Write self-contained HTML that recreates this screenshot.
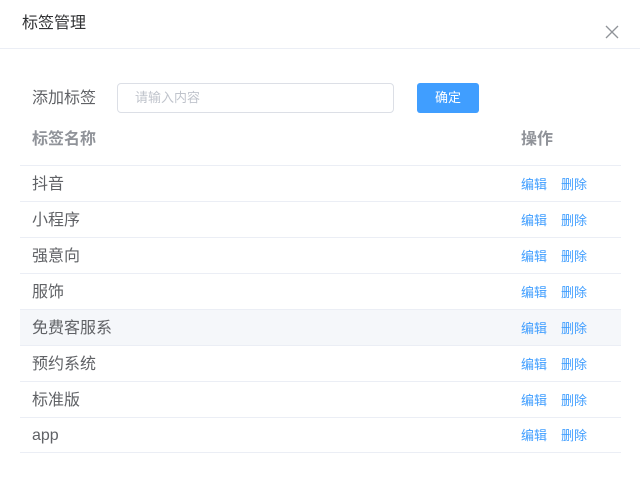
<!DOCTYPE html>
<html><head><meta charset="utf-8"><style>
*{margin:0;padding:0;box-sizing:border-box}
body{width:640px;height:494px;background:#fff;font-family:"Liberation Sans","Noto Sans CJK SC",sans-serif;position:relative;overflow:hidden}
.t{position:absolute;left:22px;top:12px;font-size:16px;color:#303133;line-height:24px}
.hd{position:absolute;left:0;right:0;top:48px;border-top:1px solid #ebeef5}
.x{position:absolute;left:605px;top:25px}
.lab{position:absolute;left:32px;top:88px;font-size:16px;color:#606266;line-height:22px}
.inp{position:absolute;left:117px;top:83px;width:277px;height:30px;border:1px solid #dcdfe6;border-radius:4px;font-size:13px;color:#c0c4cc;padding-left:17px;line-height:28px}
.btn{position:absolute;left:417px;top:83px;width:62px;height:30px;background:#409eff;border-radius:3px;color:#fff;font-size:13px;text-align:center;line-height:30px}
.th{position:absolute;top:129px;font-size:16px;font-weight:bold;color:#909399;line-height:22px}
.row{position:absolute;left:20px;width:601px;height:36px;border-bottom:1px solid #ebeef5}
.row span{position:absolute;left:12px;top:8px;font-size:16px;color:#606266;line-height:22px}
.row a{position:absolute;top:10px;font-size:13px;color:#409eff;line-height:18px}
</style></head><body>
<div class="t">标签管理</div>
<svg class="x" width="14" height="14" viewBox="0 0 14 14"><path d="M1 1L13 13M13 1L1 13" stroke="#909399" stroke-width="1.3"/></svg>
<div class="hd"></div>
<div class="lab">添加标签</div>
<div class="inp">请输入内容</div>
<div class="btn">确定</div>
<div class="th" style="left:32px">标签名称</div>
<div class="th" style="left:521px">操作</div>
<div class="row" style="top:130px"></div>
<div class="row" style="top:166px"><span>抖音</span><a style="left:501px">编辑</a><a style="left:541px">删除</a></div>
<div class="row" style="top:202px"><span>小程序</span><a style="left:501px">编辑</a><a style="left:541px">删除</a></div>
<div class="row" style="top:238px"><span>强意向</span><a style="left:501px">编辑</a><a style="left:541px">删除</a></div>
<div class="row" style="top:274px"><span>服饰</span><a style="left:501px">编辑</a><a style="left:541px">删除</a></div>
<div class="row" style="top:310px;background:#f5f7fa"><span>免费客服系</span><a style="left:501px">编辑</a><a style="left:541px">删除</a></div>
<div class="row" style="top:346px"><span>预约系统</span><a style="left:501px">编辑</a><a style="left:541px">删除</a></div>
<div class="row" style="top:382px"><span>标准版</span><a style="left:501px">编辑</a><a style="left:541px">删除</a></div>
<div class="row" style="top:417px"><span>app</span><a style="left:501px">编辑</a><a style="left:541px">删除</a></div>
</body></html>
